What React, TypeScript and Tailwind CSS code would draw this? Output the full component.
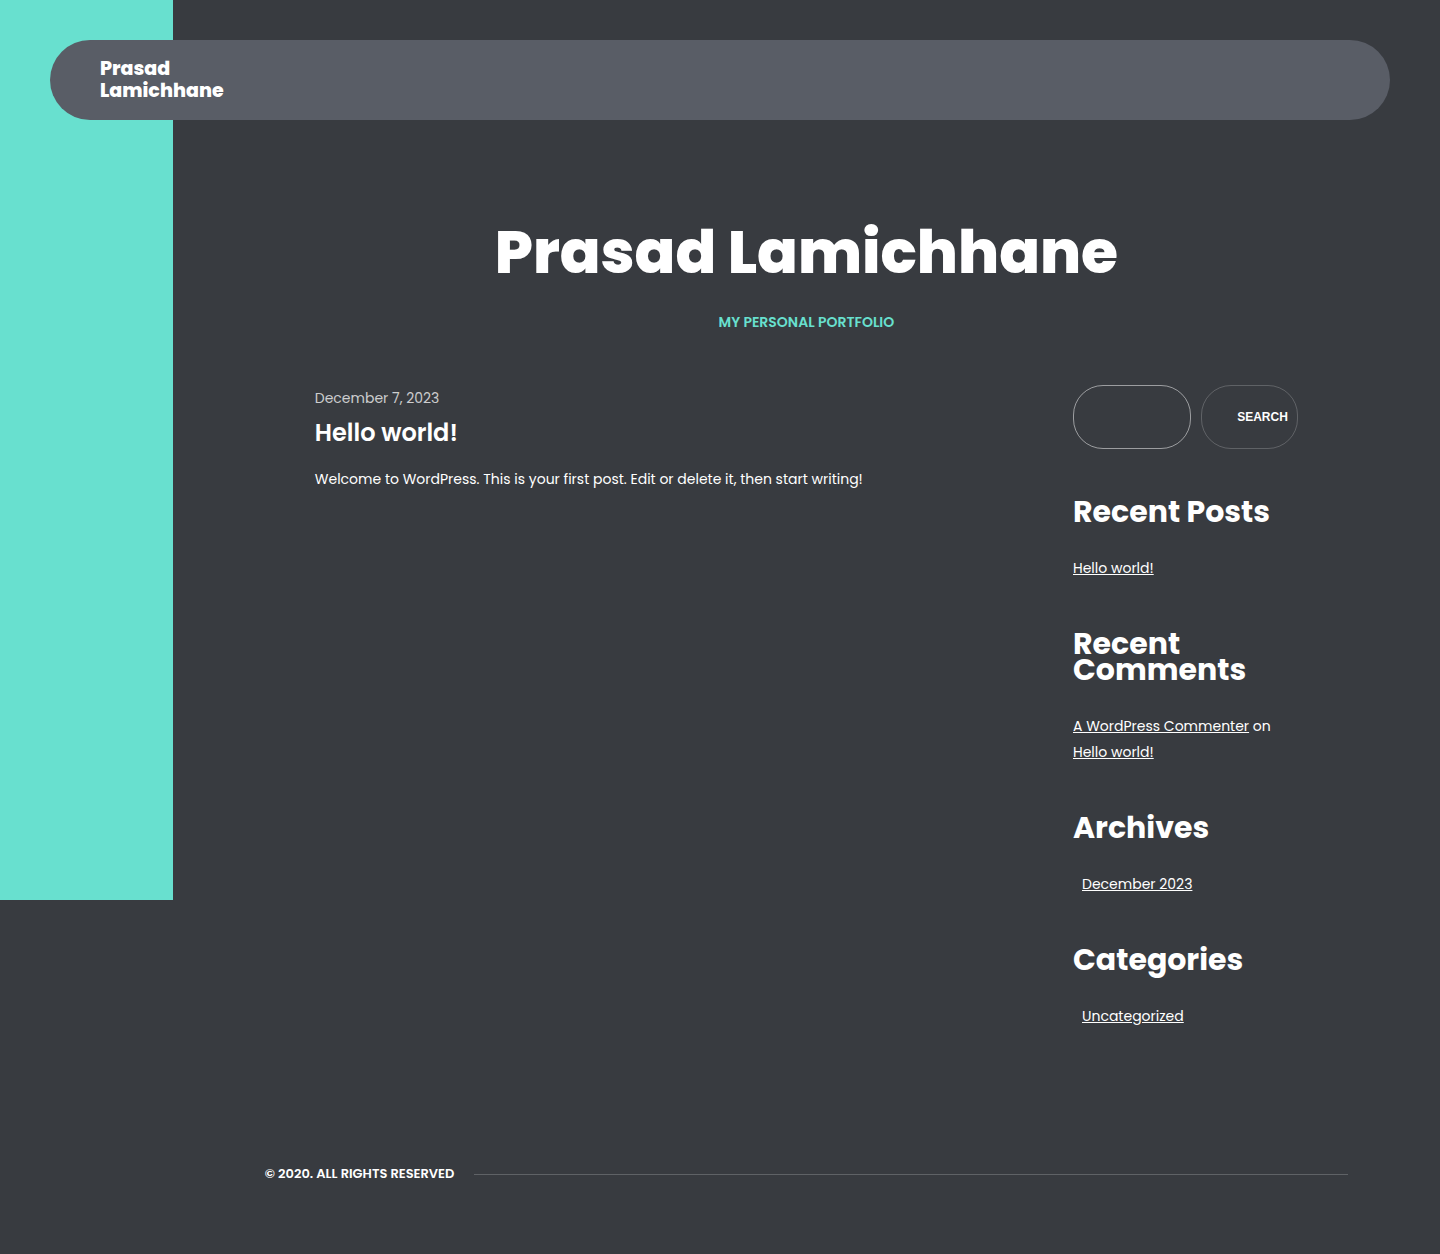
import React from 'react';

function Widget({ title, children }: { title: string; children: React.ReactNode }) {
  return (
    <section className="mb-[50px]">
      <h2 className="mb-[30px] text-[30px] font-bold leading-[26px]">{title}</h2>
      {children}
    </section>
  );
}

function TextLink({ children }: { children: React.ReactNode }) {
  return (
    <a href="#" className="underline underline-offset-1">
      {children}
    </a>
  );
}

export default function App() {
  return (
    <div className="relative min-h-screen bg-[#383b40] font-['Poppins','Inter',sans-serif] text-[14px] leading-[26px] text-white">
      <div className="absolute left-0 top-0 h-[900px] w-[12%] bg-[#68e0cf]" />
      <div className="relative px-[50px] pt-10">
        <header className="flex h-20 items-center rounded-full bg-[#595d66] px-[50px]">
          <a href="#" className="w-32 text-[19px] font-extrabold leading-[22px]">Prasad Lamichhane</a>
        </header>
      </div>
      <div className="relative ml-[12%] px-[92px] pt-[100px]">
        <div className="text-center">
          <h1 className="text-[60px] font-extrabold leading-[64px]">Prasad Lamichhane</h1>
          <p className="mt-[25px] font-semibold uppercase text-[#68e0cf]">My Personal Portfolio</p>
        </div>
        <div className="mt-[50px] flex px-[50px]">
          <main className="flex-1">
            <article>
              <p className="text-white/75">December 7, 2023</p>
              <h2 className="mt-2 text-[24px] font-semibold leading-[28px]"><a href="#">Hello world!</a></h2>
              <p className="mt-[19px]">Welcome to WordPress. This is your first post. Edit or delete it, then start writing!</p>
            </article>
          </main>
          <aside className="w-[225px]">
            <form className="mb-[50px] flex gap-[10px]">
              <input type="search" aria-label="Search" className="h-16 w-[118px] rounded-[30px] border border-white/50 bg-transparent px-5" />
              <button type="button" className="h-16 flex-1 rounded-[30px] border border-white/20 pl-[26px] font-['Liberation_Sans',sans-serif] text-[12px] font-bold uppercase">Search</button>
            </form>
            <Widget title="Recent Posts">
              <TextLink>Hello world!</TextLink>
            </Widget>
            <Widget title="Recent Comments">
              <TextLink>A WordPress Commenter</TextLink> on <TextLink>Hello world!</TextLink>
            </Widget>
            <Widget title="Archives">
              <div className="pl-[9px]"><TextLink>December 2023</TextLink></div>
            </Widget>
            <Widget title="Categories">
              <div className="pl-[9px]"><TextLink>Uncategorized</TextLink></div>
            </Widget>
          </aside>
        </div>
        <footer className="mt-[82px] flex items-center gap-5 pb-[66px] text-[13px] font-semibold uppercase">
          <span>© 2020. All Rights Reserved</span>
          <span className="h-px flex-1 bg-white/20" />
        </footer>
      </div>
    </div>
  );
}
